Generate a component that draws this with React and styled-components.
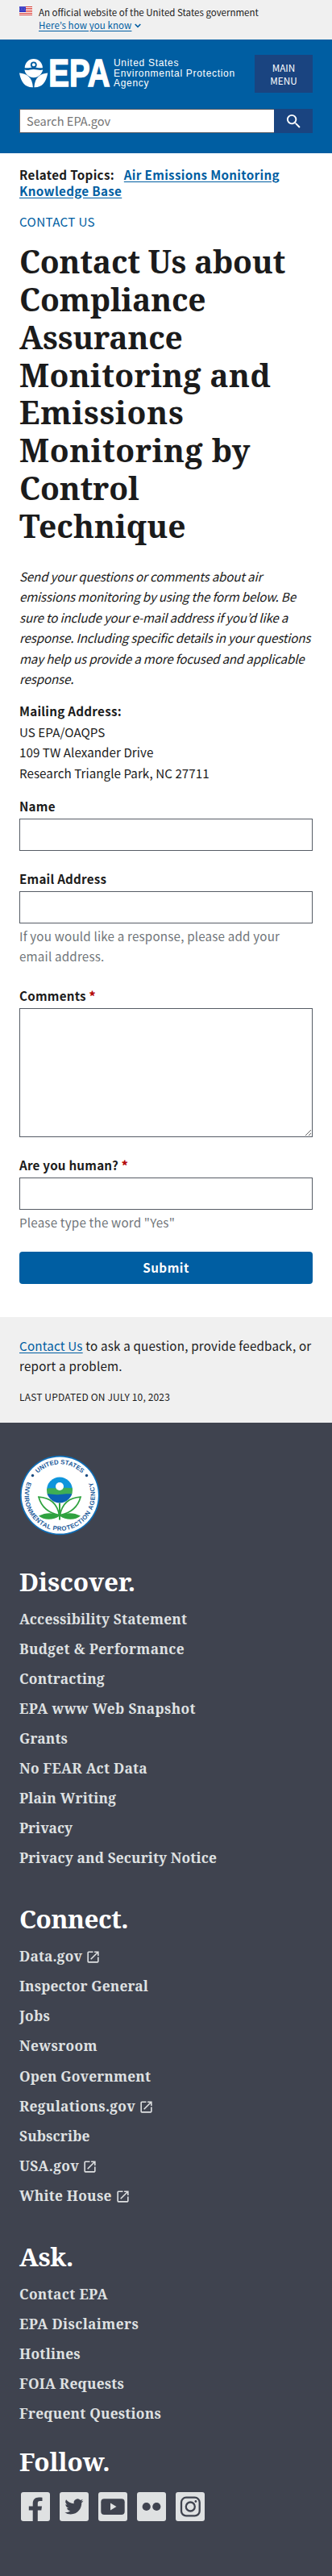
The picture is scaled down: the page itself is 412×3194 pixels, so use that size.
import React from "react";
import styled, { createGlobalStyle } from "styled-components";

const sans = '"Noto Sans CJK JP", "Noto Sans", sans-serif';
const serif = '"Noto Serif", "DejaVu Serif Condensed", "DejaVu Serif", serif';

const GlobalStyle = createGlobalStyle`
  *, *::before, *::after { box-sizing: border-box; }
  body {
    margin: 0;
    background: #fff;
    color: #1b1b1b;
    font-family: ${sans};
    font-size: 15.2px;
    line-height: 25.44px;
  }
`;

const Page = styled.div`
  width: 412px;
  height: 3194px;
  display: flex;
  flex-direction: column;
  overflow: hidden;
`;

const Banner = styled.div`
  display: flex;
  gap: 8px;
  height: 49px;
  padding: 7px 24px 0;
  background: #f0f0f0;
  font-size: 11.5px;
  line-height: 16px;
  svg { display: block; margin-top: 1px; flex: none; }
`;

const BannerLink = styled.div`
  display: flex;
  align-items: center;
  gap: 4px;
  color: #005ea2;
  letter-spacing: 0.1px;
  svg { margin-top: 2px; }
`;

const Underlined = styled.span`
  text-decoration: underline;
  text-underline-offset: 2px;
`;

const Header = styled.header`
  height: 141px;
  padding: 19px 24px 0;
  background: #005ea2;
  color: #fff;
`;

const HeaderTop = styled.div`
  display: flex;
  align-items: flex-start;
  height: 67px;
`;

const Brand = styled.div`
  display: flex;
  gap: 3px;
  flex: 1;
  padding-top: 4px;
  svg { display: block; flex: none; overflow: visible; }
`;

const Agency = styled.div`
  font: 12px/12.7px "Liberation Sans", Arial, sans-serif;
  letter-spacing: 0.7px;
  white-space: nowrap;
`;

const MenuButton = styled.button`
  width: 72px;
  height: 47px;
  padding: 0;
  border: 0;
  background: #1a4480;
  color: #fff;
  font: 11.7px/16px ${sans};
`;

const Search = styled.form`
  display: flex;
  height: 30px;
`;

const SearchInput = styled.input`
  flex: 1;
  min-width: 0;
  padding: 0 8px;
  border: 1px solid #565c65;
  border-right: 0;
  background: #fff;
  font: 14.6px/28px ${sans};
  &::placeholder { color: #757575; opacity: 1; }
`;

const SearchButton = styled.button`
  display: flex;
  align-items: center;
  justify-content: center;
  width: 48px;
  padding: 0;
  border: 0;
  background: #1a4480;
`;

const Main = styled.main`
  height: 1443px;
  padding: 15.5px 24px 0;
`;

const Related = styled.div`
  height: 58.5px;
  font-weight: 700;
  line-height: 20px;
  letter-spacing: 0.32px;
  a { color: #005ea2; text-decoration: underline; text-underline-offset: 2px; }
  span { margin-right: 8px; }
`;

const AreaName = styled.div`
  height: 37px;
  color: #005ea2;
  line-height: 20px;
  letter-spacing: 0.33px;
  text-transform: uppercase;
`;

const Title = styled.h1`
  margin: 0 0 26px;
  font: 700 39px/46.85px ${serif};
  white-space: nowrap;
`;

const TitleLine = styled.span`
  display: block;
  letter-spacing: ${(p) => p.$tracking}px;
`;

const Intro = styled.p`
  margin: 0 0 15px;
  font-style: italic;
  letter-spacing: -0.19px;
  white-space: nowrap;
`;

const Address = styled.p`
  margin: 0 0 17.5px;
  letter-spacing: 0.04px;
  strong { letter-spacing: 0.26px; }
`;

const Field = styled.div`
  margin-bottom: ${(p) => p.$gap}px;
`;

const Label = styled.label`
  display: block;
  margin-bottom: 6px;
  font-weight: 700;
  line-height: 20px;
  letter-spacing: 0.22px;
  b { color: #b50909; }
`;

const Input = styled.input`
  display: block;
  width: 100%;
  height: 40px;
  border: 1px solid #565c65;
  border-radius: 0;
`;

const Textarea = styled.textarea`
  display: block;
  width: 100%;
  height: 160px;
  border: 1px solid #565c65;
  border-radius: 0;
`;

const Hint = styled.div`
  padding-top: 3px;
  color: #71767a;
  letter-spacing: 0.18px;
`;

const Submit = styled.button`
  display: block;
  width: 100%;
  height: 40px;
  padding: 0 0 2px;
  border: 0;
  border-radius: 4px;
  background: #005ea2;
  color: #fff;
  font: 700 15.2px/20px ${sans};
  letter-spacing: 0.5px;
`;

const PageInfo = styled.div`
  height: 131px;
  padding: 23px 24px 0;
  background: #f0f0f0;
  letter-spacing: 0.19px;
  white-space: nowrap;
  a { color: #005ea2; text-decoration: underline; text-underline-offset: 2px; }
`;

const Updated = styled.div`
  margin-top: 15px;
  font-size: 12px;
  line-height: 20px;
  letter-spacing: 0.15px;
  text-transform: uppercase;
`;

const Footer = styled.footer`
  flex: 1;
  padding: 40px 24px 0;
  background: #3f434f;
  color: #fff;
  > svg { display: block; }
`;

const FooterGroup = styled.section`
  padding-top: ${(p) => p.$top}px;
`;

const FooterTitle = styled.h2`
  margin: 0;
  font: 700 31.5px/36px ${serif};
  letter-spacing: ${(p) => p.$tracking}px;
`;

const LinkList = styled.ul`
  margin: 10px 0 0;
  padding: 0;
  list-style: none;
`;

const LinkItem = styled.li`
  display: flex;
  align-items: center;
  gap: 4px;
  height: 37.1px;
  color: #dfe1e2;
  font: 700 17.3px/37.1px ${serif};
  letter-spacing: ${(p) => p.$tracking}px;
  svg { margin-top: 2px; }
`;

const Socials = styled.div`
  display: flex;
  gap: 12px;
  padding: 20.5px 0 0 2px;
  svg { display: block; }
`;

const Flag = () => (
  <svg width="16" height="11" viewBox="0 0 16 11">
    <path fill="#fff" d="M0 0h16v11H0z" />
    <path fill="#d83933" d="M0 0h16v1H0zM0 2h16v1H0zM0 4h16v1H0zM0 6h16v1H0zM0 8h16v1H0zM0 10h16v1H0z" />
    <path fill="#2a2ec0" d="M0 0h8v7H0z" />
    <g fill="#fff">
      {[1, 3, 5].map((y) => [1, 3, 5, 7].map((x) => <circle key={`${x}-${y}`} cx={x - (y === 3 ? 0.5 : 0)} cy={y} r=".45" />))}
    </g>
  </svg>
);

const Logo = () => (
  <svg width="114" height="38" viewBox="24 72 114 38" fill="#fff">
    <path d="M30.700 84.200a11.100 11.300 0 0 1 22.200 0c-4 .6-7-.6-11-.6s-7 1.200-11.200.6z" />
    <circle cx="41.800" cy="80.300" r="3.900" fill="#005ea2" />
    <circle cx="41.800" cy="80.300" r="2" />
    <path d="M30.400 86.600c4 1.300 7-.6 11.300-.6s7 1.600 11.500.6c-.8 5-5.700 9.700-11.400 9.700s-10.500-4.100-11.400-9.700z" />
    <path d="M24 90.500c9 .6 16.300 5.300 16.900 17.700-9.500.4-14.600-5.500-16.900-17.700z" />
    <path d="M59.300 90.500c-9 .6-16.300 5.300-16.900 17.700 9.500.4 14.600-5.500 16.900-17.700z" />
    <text transform="translate(60.300 107) scale(.8 1)" fontFamily="Liberation Sans" fontWeight="700" fontSize="48" stroke="#fff" strokeWidth="1.600">EPA</text>
  </svg>
);

const Seal = () => (
  <svg width="100" height="100" viewBox="0 0 100 100">
    <defs>
      <path id="arcTop" d="M11.700 50a38.600 38.600 0 0 1 77.200 0" />
      <path id="arcBottom" d="M10.800 31.500A43.700 43.700 0 1 0 89.800 31.500" />
      <clipPath id="bloom"><circle cx="50" cy="43.500" r="16" /></clipPath>
    </defs>
    <circle cx="50.300" cy="50" r="49.300" fill="#0e6eb8" />
    <circle cx="50.300" cy="50" r="47.600" fill="#fff" />
    <g fill="#1a5a9a" fontFamily="Liberation Sans" fontWeight="700" fontSize="7.800">
      <text><textPath href="#arcTop" startOffset="50%" textAnchor="middle">UNITED STATES</textPath></text>
      <text letterSpacing=".5"><textPath href="#arcBottom" startOffset="50%" textAnchor="middle">ENVIRONMENTAL PROTECTION AGENCY</textPath></text>
    </g>
    <circle cx="16.500" cy="25.500" r="1.700" fill="#174a80" />
    <circle cx="83.500" cy="25.500" r="1.700" fill="#174a80" />
    <g clipPath="url(#bloom)">
      <path fill="#0f95dc" d="M30 20h40v24H30z" />
      <path fill="#3fae54" d="M30 43c7-3 12-1 20-2s12 1 20-1v10H30z" />
      <path fill="#0b62b4" d="M30 49c8-2 12 1 20 0s13-1 20 0v15H30z" />
    </g>
    <circle cx="50" cy="39" r="5" fill="#fff" />
    <g fill="none" stroke="#2fa23f" strokeWidth="1.700">
      <path d="M49.500 74.500C47 61 38 53 24 52.200 27 63 34 71.500 49.500 74.500z" fill="#fff" />
      <path d="M50.500 74.500C53 61 62 53 76 52.200 73 63 66 71.500 50.500 74.500z" fill="#fff" />
      <path d="M50 59.500v21" strokeWidth="2" />
    </g>
    <g fill="#2fa23f">
      <path d="M50 75.500c-8-4.500-17-4.500-26 0 6 5.500 18 6 26 0z" />
      <path d="M50 75.500c8-4.500 17-4.500 26 0-6 5.500-18 6-26 0z" />
    </g>
  </svg>
);

const ExternalIcon = () => (
  <svg width="19" height="19" viewBox="0 0 24 24" fill="#dfe1e2">
    <path d="M19 19H5V5h7V3H5a2 2 0 0 0-2 2v14a2 2 0 0 0 2 2h14c1.100 0 2-.9 2-2v-7h-2v7zM14 3v2h3.590l-9.830 9.830 1.410 1.410L19 6.410V10h2V3h-7z" />
  </svg>
);

const ink = "#3f434f";
const glyphs = {
  Facebook: <path fill={ink} d="M14.700 36V22.500H9.800v-4.900h4.900v-3.400c0-5 3-7.700 7.500-7.700 1.900 0 3.300.1 4.300.3v4.300h-2.800c-2.400 0-2.900 1.200-2.900 2.900v3.600h5.200l-.7 4.900h-4.500V36z" />,
  Twitter: <path fill={ink} transform="translate(5.300 6) scale(1.020)" d="M23.600 4.600c-.8.400-1.700.6-2.600.7.900-.6 1.600-1.400 2-2.500-.9.500-1.900.9-2.900 1.100a4.600 4.600 0 0 0-7.900 4.200C8.300 7.900 5 6.100 2.700 3.300a4.600 4.600 0 0 0 1.400 6.200c-.7 0-1.400-.2-2.100-.6 0 2.300 1.600 4.200 3.700 4.700-.7.200-1.400.2-2.100.1.600 1.800 2.300 3.200 4.300 3.200A9.300 9.300 0 0 1 1 18.800 13.200 13.200 0 0 0 8.200 21c8.700 0 13.600-7.300 13.300-13.900.8-.7 1.600-1.500 2.100-2.500z" />,
  YouTube: (
    <>
      <rect x="3.300" y="8.200" width="29.400" height="19.800" rx="4" fill={ink} />
      <path fill="#dfe1e2" d="M15 13.600v8.800l7.500-4.400z" />
    </>
  ),
  Flickr: (
    <g fill={ink}>
      <circle cx="11.700" cy="18" r="5.100" />
      <circle cx="24.300" cy="18" r="5.100" />
    </g>
  ),
  Instagram: (
    <g fill="none" stroke={ink} strokeWidth="2.300">
      <rect x="7" y="6.700" width="22.700" height="22.700" rx="6" />
      <circle cx="18.300" cy="18" r="5.500" />
      <circle cx="24.900" cy="11.500" r="1.400" fill={ink} stroke="none" />
    </g>
  ),
};

const SocialIcon = ({ name }) => (
  <svg width="36" height="36" viewBox="0 0 36 36" role="img" aria-label={name}>
    <rect width="36" height="36" rx="3" fill="#dfe1e2" />
    {glyphs[name]}
  </svg>
);

const titleLines = [
  ["Contact Us about", -0.26],
  ["Compliance", -0.19],
  ["Assurance", -0.25],
  ["Monitoring and", 0.33],
  ["Emissions", 0.77],
  ["Monitoring by", 0.55],
  ["Control", -0.2],
  ["Technique", 0.04],
];

// Each link is [label, letter-spacing, leads to another site].
const groups = [
  {
    title: "Discover.",
    tracking: -0.08,
    top: 38.5,
    links: [
      ["Accessibility Statement", 0.17],
      ["Budget & Performance", 0.33],
      ["Contracting", 0.26],
      ["EPA www Web Snapshot", 0.38],
      ["Grants", 0.13],
      ["No FEAR Act Data", 0.26],
      ["Plain Writing", 0.2],
      ["Privacy", 0],
      ["Privacy and Security Notice", 0.12],
    ],
  },
  {
    title: "Connect.",
    tracking: -0.51,
    top: 38.8,
    links: [
      ["Data.gov", 0.15, true],
      ["Inspector General", 0.13],
      ["Jobs", 0.25],
      ["Newsroom", 0.39],
      ["Open Government", 0.14],
      ["Regulations.gov", 0.32, true],
      ["Subscribe", 0.12],
      ["USA.gov", 0.37, true],
      ["White House", 0.24, true],
    ],
  },
  {
    title: "Ask.",
    tracking: -0.3,
    top: 38.8,
    links: [
      ["Contact EPA", 0.35],
      ["EPA Disclaimers", 0.37],
      ["Hotlines", 0.29],
      ["FOIA Requests", 0.22],
      ["Frequent Questions", 0.21],
    ],
  },
];

export default function App() {
  return (
    <Page>
      <GlobalStyle />
      <Banner>
        <Flag />
        <div>
          <div>An official website of the United States government</div>
          <BannerLink>
            <Underlined>Here’s how you know</Underlined>
            <svg width="8" height="6" viewBox="0 0 8 6" fill="none" stroke="#005ea2" strokeWidth="1.600"><path d="M.7 1l3.300 3.300L7.300 1" /></svg>
          </BannerLink>
        </div>
      </Banner>
      <Header>
        <HeaderTop>
          <Brand>
            <Logo />
            <Agency>United States<br />Environmental Protection<br />Agency</Agency>
          </Brand>
          <MenuButton>MAIN<br />MENU</MenuButton>
        </HeaderTop>
        <Search>
          <SearchInput placeholder="Search EPA.gov" />
          <SearchButton type="button" aria-label="Search">
            <svg width="23" height="23" viewBox="0 0 24 24" fill="#fff"><path d="M15.500 14h-.79l-.28-.27A6.471 6.471 0 0 0 16 9.500 6.500 6.500 0 1 0 9.500 16c1.610 0 3.090-.59 4.230-1.570l.27.28v.79l5 4.990L20.490 19l-4.990-5zm-6 0C7.010 14 5 11.990 5 9.500S7.010 5 9.500 5 14 7.010 14 9.500 11.990 14 9.500 14z" /></svg>
          </SearchButton>
        </Search>
      </Header>
      <Main>
        <Related><span>Related Topics:</span> <a>Air Emissions Monitoring<br />Knowledge Base</a></Related>
        <AreaName>Contact Us</AreaName>
        <Title>
          {titleLines.map(([text, tracking]) => <TitleLine key={text} $tracking={tracking}>{text}</TitleLine>)}
        </Title>
        <Intro>
          Send your questions or comments about air<br />
          emissions monitoring by using the form below. Be<br />
          sure to include your e-mail address if you’d like a<br />
          response. Including specific details in your questions<br />
          may help us provide a more focused and applicable<br />
          response.
        </Intro>
        <Address>
          <strong>Mailing Address:</strong><br />US EPA/OAQPS<br />109 TW Alexander Drive<br />Research Triangle Park, NC 27711
        </Address>
        <Field $gap={24}><Label>Name</Label><Input /></Field>
        <Field $gap={25}>
          <Label>Email Address</Label>
          <Input />
          <Hint>If you would like a response, please add your<br />email address.</Hint>
        </Field>
        <Field $gap={24}><Label>Comments <b>*</b></Label><Textarea /></Field>
        <Field $gap={24.5}>
          <Label>Are you human? <b>*</b></Label>
          <Input />
          <Hint>Please type the word "Yes"</Hint>
        </Field>
        <Submit type="button">Submit</Submit>
      </Main>
      <PageInfo>
        <a>Contact Us</a> to ask a question, provide feedback, or<br />report a problem.
        <Updated>Last updated on July 10, 2023</Updated>
      </PageInfo>
      <Footer>
        <Seal />
        {groups.map((g) => (
          <FooterGroup key={g.title} $top={g.top}>
            <FooterTitle $tracking={g.tracking}>{g.title}</FooterTitle>
            <LinkList>
              {g.links.map(([label, tracking, external]) => (
                <LinkItem key={label} $tracking={tracking}>{label}{external && <ExternalIcon />}</LinkItem>
              ))}
            </LinkList>
          </FooterGroup>
        ))}
        <FooterGroup $top={22.5}>
          <FooterTitle $tracking={-0.1}>Follow.</FooterTitle>
          <Socials>
            {Object.keys(glyphs).map((n) => <SocialIcon key={n} name={n} />)}
          </Socials>
        </FooterGroup>
      </Footer>
    </Page>
  );
}
